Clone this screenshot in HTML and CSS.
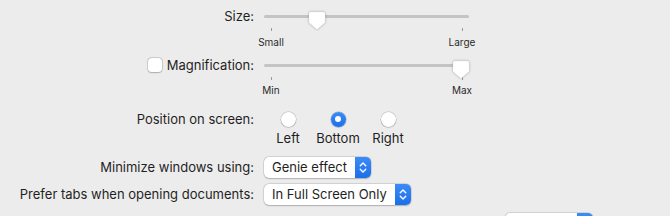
FILE: index.html
```html
<!DOCTYPE html>
<html lang="en">
<head>
<meta charset="utf-8">
<title>Dock</title>
<link rel="stylesheet" href="styles.css">
</head>
<body>
<div class="prefs">
  <div class="row row-size">
    <div class="label">Size:</div>
    <div class="slider">
      <div class="track">
        <svg class="thumb" style="left:44px" width="18" height="20" viewBox="0 0 18 20"><path d="M3 0.75 H15 Q17.25 0.75 17.25 3 V11.5 L9 18.75 L0.75 11.5 V3 Q0.75 0.75 3 0.75 Z"/></svg>
      </div>
      <div class="scale">
        <div class="stop"><span class="tick"></span><span class="stop-label">Small</span></div>
        <div class="stop"><span class="tick"></span><span class="stop-label">Large</span></div>
      </div>
    </div>
  </div>

  <div class="row row-mag">
    <div class="label"><span class="checkbox"></span>Magnification:</div>
    <div class="slider">
      <div class="track">
        <svg class="thumb thumb-mag" style="left:188px" width="18" height="20" viewBox="0 0 18 20"><path d="M3 0.75 H15 Q17.25 0.75 17.25 3 V11.5 L9 18.75 L0.75 11.5 V3 Q0.75 0.75 3 0.75 Z"/></svg>
      </div>
      <div class="scale">
        <div class="stop"><span class="tick"></span><span class="stop-label">Min</span></div>
        <div class="stop"><span class="tick"></span><span class="stop-label">Max</span></div>
      </div>
    </div>
  </div>

  <div class="row row-pos">
    <div class="label">Position on screen:</div>
    <div class="radios">
      <div class="option"><span class="radio"></span><span class="option-label">Left</span></div>
      <div class="option"><span class="radio radio-on"></span><span class="option-label">Bottom</span></div>
      <div class="option"><span class="radio"></span><span class="option-label">Right</span></div>
    </div>
  </div>

  <div class="row row-min">
    <div class="label">Minimize windows using:</div>
    <div class="control">
      <div class="popup"><span class="popup-text">Genie effect</span><span class="stepper"><svg width="16" height="21" viewBox="0 0 16 21"><path d="M5.25 8.75 L8 6 L10.75 8.75 M5.25 12.25 L8 15 L10.75 12.25"/></svg></span></div>
    </div>
  </div>

  <div class="row row-tabs">
    <div class="label">Prefer tabs when opening documents:</div>
    <div class="control">
      <div class="popup"><span class="popup-text">In Full Screen Only</span><span class="stepper"><svg width="16" height="21" viewBox="0 0 16 21"><path d="M5.25 8.75 L8 6 L10.75 8.75 M5.25 12.25 L8 15 L10.75 12.25"/></svg></span></div>
    </div>
  </div>

  <div class="row row-dbl">
    <div class="label"></div>
    <div class="control dbl">
      <div class="popup popup-dbl"><span class="popup-text"></span><span class="stepper"><svg width="16" height="21" viewBox="0 0 16 21"><path d="M5.25 8.75 L8 6 L10.75 8.75 M5.25 12.25 L8 15 L10.75 12.25"/></svg></span></div>
    </div>
  </div>
</div>
</body>
</html>
```

FILE: styles.css
```css
html, body {
  margin: 0;
  padding: 0;
  background: #ececec;
  overflow: hidden;
}

body {
  font-family: Inter, "Noto Sans", "Liberation Sans", sans-serif;
  font-size: 13px;
  color: #1f1f1f;
  width: 670px;
  height: 216px;
}

.prefs {
  padding-top: 6px;
}

.row {
  display: grid;
  grid-template-columns: 254px 1fr;
  column-gap: 10px;
  align-items: start;
}

.label {
  line-height: 20px;
  text-align: right;
  white-space: nowrap;
  display: flex;
  justify-content: flex-end;
  align-items: center;
}

/* slider */
.slider {
  width: 205px;
}

.track {
  position: relative;
  height: 20px;
}

.track::before {
  content: "";
  display: block;
  position: relative;
  top: 9px;
  height: 3px;
  border-radius: 2px;
  background: #c4c4c4;
}

.thumb {
  position: absolute;
  top: 5px;
  filter: drop-shadow(0 0.5px 0.8px rgba(0, 0, 0, 0.28));
}

.thumb path {
  fill: #fff;
  stroke: rgba(0, 0, 0, 0.12);
  stroke-width: 0.5;
}

.scale {
  display: flex;
  justify-content: space-between;
}

.stop {
  width: 14px;
  display: flex;
  flex-direction: column;
  align-items: center;
}

.tick {
  width: 1px;
  height: 3px;
  margin-top: 2px;
  background: #9a9a9a;
}

.stop-label {
  margin-top: 5px;
  font-size: 10px;
  line-height: 12px;
  color: #2a2a2a;
  white-space: nowrap;
}

.row-mag {
  margin-top: 7px;
}

.row-mag .stop-label {
  margin-top: 4px;
}

.checkbox {
  width: 14px;
  height: 14px;
  border-radius: 3.5px;
  background: #fff;
  box-shadow: 0 0 0 0.5px rgba(0, 0, 0, 0.22), 0 0.5px 1.5px rgba(0, 0, 0, 0.18);
  margin-right: 5px;
}

/* radios */
.row-pos {
  margin-top: 13px;
}

.radios {
  display: grid;
  grid-template-columns: repeat(3, 50px);
  margin-left: -1px;
}

.option {
  display: flex;
  flex-direction: column;
  align-items: center;
}

.radio {
  width: 15px;
  height: 15px;
  margin: 2.5px 0;
  border-radius: 50%;
  background: #fff;
  box-shadow: 0 0 0 0.5px rgba(0, 0, 0, 0.2), 0 0.5px 1.5px rgba(0, 0, 0, 0.18);
  display: flex;
  align-items: center;
  justify-content: center;
}

.radio-on {
  background: linear-gradient(#3b8cf6, #1b6fe8);
  box-shadow: 0 0 0 0.5px rgba(0, 60, 180, 0.35), 0 0.5px 1.5px rgba(0, 0, 0, 0.18);
}

.radio-on::after {
  content: "";
  width: 6px;
  height: 6px;
  border-radius: 50%;
  background: #fff;
}

.option-label {
  margin-top: 1px;
  line-height: 16px;
  white-space: nowrap;
}

/* popups */
.row-min {
  margin-top: 11px;
}

.row-min .label,
.row-tabs .label {
  line-height: 21px;
}

.row-tabs {
  margin-top: 6px;
}

.row-dbl {
  margin-top: 8px;
}

.control {
  display: flex;
}

.dbl {
  padding-left: 241px;
}

.popup {
  display: flex;
  align-items: stretch;
  height: 21px;
  border-radius: 5px;
  background: #fff;
  box-shadow: 0 0 0 0.5px rgba(0, 0, 0, 0.16), 0 0.5px 1.5px rgba(0, 0, 0, 0.2);
}

.popup-text {
  padding: 0 8px;
  line-height: 21px;
  white-space: nowrap;
}

.popup-dbl .popup-text {
  width: 56px;
}

.stepper {
  width: 16px;
  border-radius: 0 5px 5px 0;
  background: linear-gradient(#3b8cf6, #1b6fe8);
  display: flex;
}

.stepper path {
  fill: none;
  stroke: #fff;
  stroke-width: 1.4;
  stroke-linecap: round;
  stroke-linejoin: round;
}
```
